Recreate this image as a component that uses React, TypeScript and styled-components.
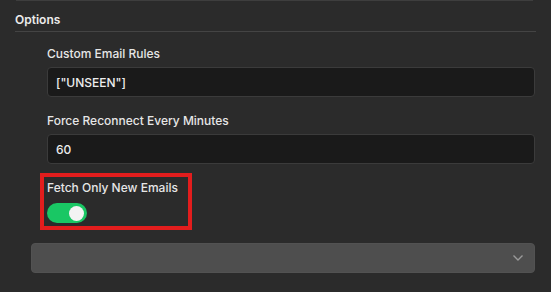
import React from "react";
import styled, { createGlobalStyle } from "styled-components";

const Global = createGlobalStyle`
  html, body { margin: 0; padding: 0; background: #2b2b2b; }
  body { font-family: Inter, "Noto Sans", sans-serif; color: #e6e6e6; }
`;

const Page = styled.div`
  width: 551px;
  height: 292px;
  box-sizing: border-box;
  padding: 0 15px 0 15px;
  display: flex;
  flex-direction: column;
  overflow: hidden;
`;

const PrevCardEdge = styled.div`
  height: 1px;
  margin: 0 3px 0 1px;
  background: #3e3e3e;
`;

const SectionTitle = styled.div`
  margin-top: 11px;
  padding-bottom: 3px;
  font-size: 12px;
  line-height: 16px;
  font-weight: 600;
  color: #ececec;
  border-bottom: 1px solid #444444;
`;

const Fields = styled.div`
  display: flex;
  flex-direction: column;
  gap: 16px;
  padding: 14px 1px 0 32px;
`;

const Field = styled.div<{ $highlight?: boolean }>`
  display: flex;
  flex-direction: column;
  gap: ${(p) => (p.$highlight ? "7px" : "5px")};
  ${(p) =>
    p.$highlight &&
    `
    align-self: flex-start;
    width: 138px;
    outline: 4px solid #e21d1d;
    outline-offset: 3px;
  `}
`;

const Label = styled.div`
  font-size: 12px;
  line-height: 16px;
  font-weight: 500;
  color: #e6e6e6;
  white-space: nowrap;
`;

const TextInput = styled.div`
  height: 30px;
  box-sizing: border-box;
  display: flex;
  align-items: center;
  padding: 0 8px;
  background: #1a1a1a;
  border: 1px solid #3b3b3b;
  border-radius: 4px;
  font-size: 12px;
  font-weight: 500;
  color: #ededed;
`;

const Toggle = styled.div<{ $on: boolean }>`
  width: 40px;
  height: 20px;
  border-radius: 10px;
  background: ${(p) => (p.$on ? "#19c764" : "#555")};
  display: flex;
  align-items: center;
  justify-content: ${(p) => (p.$on ? "flex-end" : "flex-start")};
  padding: 0 3px;
  box-sizing: border-box;
`;

const Knob = styled.div`
  width: 15px;
  height: 15px;
  border-radius: 50%;
  background: #f3f3f3;
`;

const Select = styled.div`
  margin: 20px 1px 0 16px;
  height: 30px;
  box-sizing: border-box;
  background: #4e4e4e;
  border: 1px solid #525252;
  border-radius: 4px;
  display: flex;
  align-items: center;
  justify-content: flex-end;
  padding-right: 10px;
`;

const Chevron = () => (
  <svg width="12" height="8" viewBox="0 0 12 8" fill="none">
    <path d="M1.5 1.5 L6 6 L10.5 1.5" stroke="#9a9a9a" strokeWidth="1.4" />
  </svg>
);

export default function App() {
  return (
    <>
      <Global />
      <Page>
        <PrevCardEdge />
        <SectionTitle>Options</SectionTitle>
        <Fields>
          <Field>
            <Label>Custom Email Rules</Label>
            <TextInput>["UNSEEN"]</TextInput>
          </Field>
          <Field>
            <Label>Force Reconnect Every Minutes</Label>
            <TextInput>60</TextInput>
          </Field>
          <Field $highlight>
            <Label>Fetch Only New Emails</Label>
            <Toggle $on>
              <Knob />
            </Toggle>
          </Field>
        </Fields>
        <Select>
          <Chevron />
        </Select>
      </Page>
    </>
  );
}
